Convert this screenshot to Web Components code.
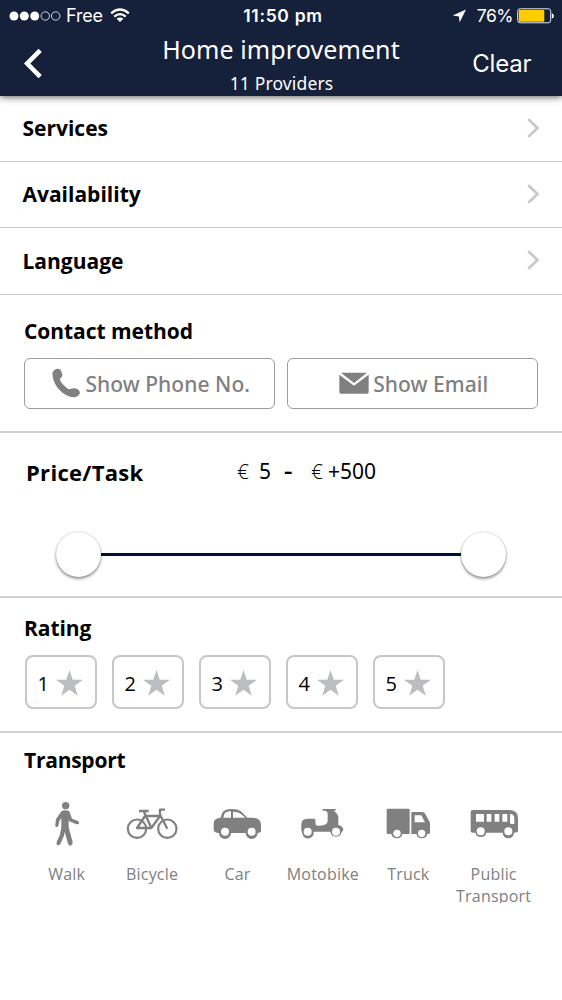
<!DOCTYPE html>
<html lang="en">
<head>
<meta charset="utf-8">
<title>Home improvement</title>
<style>
html,body{margin:0;padding:0;background:#fff}
body{font-family:"Noto Sans","Open Sans",sans-serif;color:#000;width:562px;height:1000px;overflow:hidden}
</style>
</head>
<body>
<filter-screen></filter-screen>
<script>
const define=(name,html,fill)=>customElements.define(name,class extends HTMLElement{
  constructor(){super();this.attachShadow({mode:'open'}).innerHTML=html;}
  connectedCallback(){if(fill)fill(this,this.shadowRoot);}
});

define('status-bar',`<style>
:host{display:grid;grid-template-columns:1fr auto 1fr;height:31px;align-items:center;font:18px/31px Inter,sans-serif;color:#fff;padding:0 8px 0 9px}
.l,.r{display:flex;align-items:center}.r{justify-content:flex-end}
.t{font-weight:600;font-size:17.5px;letter-spacing:.7px;padding-left:3px}
.c{margin-left:4px;letter-spacing:-.15px}.w{margin-left:7px}.p{margin:0 4px 0 9px;font-size:17.5px;letter-spacing:-.5px}
.r svg:first-child{margin-right:1px}
svg{display:block}
</style>
<div class="l"><svg width="53" height="12"><g fill="#fff"><circle cx="5" cy="6" r="4.5"/><circle cx="15.3" cy="6" r="4.5"/><circle cx="25.7" cy="6" r="4.5"/></g><g fill="none" stroke="#e4e7ee" stroke-width=".9"><circle cx="36.3" cy="6" r="4.2"/><circle cx="46.7" cy="6" r="4.2"/></g></svg><span class="c">Free</span>
<svg class="w" width="20" height="16" viewBox="0 0 20 16"><g fill="none" stroke="#fff" stroke-width="2.3"><path d="M1.2 5.3Q10-2.3 18.8 5.3"/><path d="M4.3 8.6Q10 3.6 15.7 8.6"/></g><path d="M6.6 10.8Q10 8.1 13.4 10.8L10 14.1Z" fill="#fff"/></svg></div>
<span class="t">11:50 pm</span>
<div class="r"><svg width="15" height="14" viewBox="0 0 15 14"><path d="M14 .4 7.6 13.6 7 7.6.7 6.5Z" fill="#fff"/></svg><span class="p">76%</span><svg width="37" height="16" viewBox="0 0 37 16"><rect x=".7" y=".8" width="33" height="14" rx="2.5" fill="none" stroke="#e8eaf0" stroke-width="1"/><rect x="1.8" y="2" width="25.5" height="11.7" rx="1" fill="#fc0"/><path d="M34.9 5.2q2 .6 2 2.7t-2 2.7Z" fill="#fff"/></svg></div>`);

define('nav-header',`<style>
:host{display:block;height:96px;background:#15203a;color:#fff;box-shadow:0 1px 7px rgba(0,0,0,.65);position:relative}
.bar{display:grid;grid-template-columns:120px 1fr 120px;height:65px}
.back{padding:17px 0 0 23px}.back svg{display:block}
.mid{text-align:center}
.title{font-size:25px;line-height:36px;height:37px;letter-spacing:.1px}
.sub{font-size:17.5px;line-height:30px;height:28px;letter-spacing:.15px;padding-left:1px}
.clear{font:24px/66px Inter,sans-serif;letter-spacing:-.15px;text-align:right;padding-right:30.5px;height:65px}
</style><status-bar></status-bar><div class="bar"><div class="back"><svg width="22" height="32" viewBox="0 0 22 32" fill="none" stroke="#fff" stroke-width="4.6"><path d="M17.2 2.3 4.2 15.5 17.2 28.7"/></svg></div>
<div class="mid"><div class="title">Home improvement</div><div class="sub">11 Providers</div></div><div class="clear">Clear</div></div>`);

define('nav-row',`<style>
:host{display:flex;box-sizing:border-box;height:66px;border-bottom:1px solid #c8c8c8;align-items:center;justify-content:space-between;padding:0 22px 2px 22.5px;font:700 21px/30px "Open Sans",sans-serif}
span{padding-top:1px}
svg{display:block}
</style><span><slot></slot></span><svg width="13" height="20" viewBox="0 0 13 20" fill="none" stroke="#c7c7cc" stroke-width="2.6"><path d="M1.3 1.2 10.5 10 1.3 18.8"/></svg>`);

define('form-section',`<style>
:host{display:block;box-sizing:border-box;border-bottom:2px solid #d0d0d0;padding:0 24px}
h2{margin:0;font:700 21px/30px "Open Sans",sans-serif;letter-spacing:var(--heading-spacing,-.05px)}
</style><h2></h2><slot></slot>`,(h,r)=>{const t=r.querySelector('h2');h.hasAttribute('label')?t.textContent=h.getAttribute('label'):t.remove();});

define('contact-button',`<style>
:host{display:flex;box-sizing:border-box;height:51px;border:1.5px solid #9c9c9c;border-radius:6px;align-items:center;justify-content:center;font-size:21px;font-weight:500;color:#808080;line-height:48px;white-space:nowrap;padding-left:2.5px;letter-spacing:.05px}
</style><slot name="icon"></slot><slot></slot>`);

define('range-slider',`<style>
:host{display:flex;align-items:center;justify-content:space-between;height:46px;background:linear-gradient(#03103a,#03103a) center/380px 3px no-repeat}
i{width:45px;height:45px;border-radius:50%;background:#fff;box-shadow:0 2px 3px rgba(0,0,0,.4),0 0 1.5px rgba(0,0,0,.3)}
</style><i></i><i></i>`);

define('rating-chip',`<style>
:host{display:flex;box-sizing:border-box;width:72px;height:54px;border:2px solid #c6c7ca;border-radius:8px;align-items:center;font:20px/50px "Open Sans",sans-serif;padding-left:10.5px}
span{padding-top:3px}
svg{display:block;margin:1px 0 0 7px}
</style><span><slot></slot></span><svg width="27" height="26" viewBox="0 0 27 26"><path fill="#bbbdc1" d="M13.5 0 16.7 9.7H27L18.7 15.8 21.8 25.7 13.5 19.7 5.2 25.7 8.3 15.8 0 9.7H10.3Z"/></svg>`);

const ICONS={
walk:['20 21 180 150','<circle cx="106" cy="47" r="11"/><path d="M94 63Q106 58 117 64L125 86 143 93Q149 97 145 102 142 104 137 102L117 94 115 89V112L127 157Q128 165 121 167 115 167 113 161L103 125 101 137 90 162Q87 167 81 165 77 162 79 156L89 134 93 113V85L87 93 84 108Q82 112 77 111 74 109 75 104L77 87Z"/>'],
bike:['276 21 180 150','<g fill="none" stroke="#808080" stroke-width="6.5"><circle cx="321" cy="116" r="27.5"/><circle cx="412" cy="116" r="27.5"/><path d="M327 63H356M341 63 364 114H321L345 78H391M364 114 391 77M405 59H390V74L412 116" stroke-width="7" stroke-linejoin="round"/></g>'],
car:['22 21 180 150','<path fill-rule="evenodd" d="M62 84 68 68Q74 57 95 57 112 56 124 64L143 83H160Q184 84 184 105V122Q184 128 174 129A18 18 0 0 1 138 129H94A18 18 0 0 1 58 129Q42 127 42 119V101Q43 88 54 85ZM71 83H94V64Q78 64 74 72ZM100 83H137L124 72Q115 65 100 65Z"/><g fill="#fff"><circle cx="76" cy="125" r="12"/><circle cx="156" cy="125" r="12"/></g>'],
moto:['278 21 180 150','<path d="M367 57H406V62H399Q412 68 414 82V105Q429 109 429 120L423 128A17 17 0 0 1 390 125H340A17 17 0 0 1 306 131Q303 125 303 118V104Q303 86 321 86H344Q346 92 346 104 349 108 358 107 382 106 382 93V68L376 62H367Z"/><g fill="#fff"><circle cx="322" cy="125" r="12"/><circle cx="407" cy="125" r="12"/></g>'],
truck:['24 21 180 150','<path fill-rule="evenodd" d="M54 56H115Q119 56 119 60V132H97A17 17 0 0 1 64 132H54Q50 132 50 128V60Q50 56 54 56ZM124 66H158Q163 67 166 72L180 98V128Q180 132 172 132A17 17 0 0 1 139 132H124ZM134 76V97H165L154 76Z"/><g fill="#fff"><circle cx="81" cy="130" r="11"/><circle cx="155" cy="130" r="11"/></g>'],
bus:['280 21 180 150','<path fill-rule="evenodd" d="M306 60H414Q442 60 442 83V123Q442 128 430 128A17 17 0 0 1 396 128H347A17 17 0 0 1 314 128H306Q300 128 300 122V66Q300 60 306 60ZM316 72V95H340V72ZM348 72V95H362V72ZM372 72V95H386V72ZM395 72V95H410V72ZM418 72V98Q418 102 423 102H431V84Q430 72 418 72Z"/><g fill="#fff"><circle cx="330" cy="124" r="12"/><circle cx="413" cy="124" r="12"/></g>']};
define('transport-option',`<style>
:host{display:flex;flex-direction:column;align-items:center;text-align:center;color:#808080;font:16px/22px "Open Sans",sans-serif;letter-spacing:.2px}
svg{display:block;width:60px;height:50px;fill:#808080;margin-bottom:16px}
</style><svg></svg><span><slot></slot></span>`,(h,r)=>{const [v,p]=ICONS[h.getAttribute('icon')],s=r.querySelector('svg');s.setAttribute('viewBox',v);s.innerHTML=p;});

define('filter-screen',`<style>
:host{display:block}
nav-row:nth-of-type(3){height:67px}
.contact{height:138px;padding-top:21px}
.buttons{display:grid;grid-template-columns:251px 251px;gap:12px;margin-top:12px}
.price{height:165px;padding-top:23px}
.line{display:flex;font-size:21px;line-height:30px;margin-left:2px;height:33px;align-items:flex-start}
.line b{font:700 22px/33px "Open Sans",sans-serif;letter-spacing:.3px;width:211px}
.line span{display:block}
.euro{font-weight:300;font-family:"Open Sans",sans-serif}
range-slider{margin:42px 32px 0 32px}
.rating{height:136px;padding-top:16px;margin-top:-1px}
.chips{display:flex;gap:15px;margin:12px 0 0 1px}
.transport{--heading-spacing:-.25px;border:0;height:170px;padding-top:12px;overflow:hidden}
.grid{display:grid;grid-template-columns:repeat(6,85.4px);margin:22px 0 0 0}
svg{display:block}
</style>
<nav-header></nav-header>
<nav-row>Services</nav-row><nav-row>Availability</nav-row><nav-row>Language</nav-row>
<form-section class="contact" label="Contact method"><div class="buttons">
<contact-button><svg slot="icon" width="28" height="30" viewBox="158 172 83 89" style="margin:-2px 5px 0 1px"><path fill="#808080" d="M159 189Q160 178 173 174 181 173 185 180L189 193Q188 200 181 205 185 220 207 235L219 233Q225 230 234 235 241 239 241 247 237 256 226 259 207 260 187 244 161 222 159 189Z"/></svg>Show Phone No.</contact-button>
<contact-button><svg slot="icon" width="30" height="22" viewBox="0 0 90 66" style="margin:-2px 4px 0 0"><path fill="#808080" d="M6 2H84L45 33ZM1 8 45 41 89 8V60Q89 65 84 65H6Q1 65 1 60Z"/></svg>Show Email</contact-button>
</div></form-section>
<form-section class="price"><div class="line"><b>Price/Task</b><span class="euro" style="width:22px">€</span><span style="width:25px">5</span><span style="width:27px;font-weight:600;transform:scaleX(1.25);transform-origin:0 0">-</span><span class="euro" style="width:17px">€</span><span>+500</span></div><range-slider></range-slider></form-section>
<form-section class="rating" label="Rating"><div class="chips"><rating-chip>1</rating-chip><rating-chip>2</rating-chip><rating-chip>3</rating-chip><rating-chip>4</rating-chip><rating-chip>5</rating-chip></div></form-section>
<form-section class="transport" label="Transport"><div class="grid">
<transport-option icon="walk">Walk</transport-option><transport-option icon="bike">Bicycle</transport-option><transport-option icon="car">Car</transport-option><transport-option icon="moto">Motobike</transport-option><transport-option icon="truck">Truck</transport-option><transport-option icon="bus">Public<br>Transport</transport-option>
</div></form-section>`);
</script>
</body>
</html>
